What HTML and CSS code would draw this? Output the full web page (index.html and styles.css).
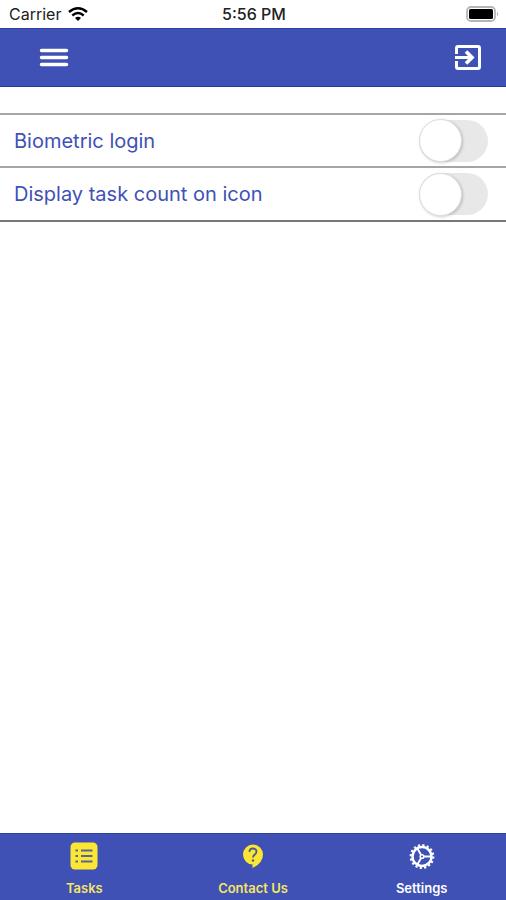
FILE: index.html
```html
<!DOCTYPE html>
<html lang="en">
<head>
<meta charset="utf-8">
<meta name="viewport" content="width=device-width, initial-scale=1">
<title>Settings</title>
<link rel="stylesheet" href="styles.css">
</head>
<body>
<div class="status">
  <div class="carrier">
    <span>Carrier</span>
    <svg width="20" height="14" viewBox="0 0 20 14" fill="none" stroke="#000" stroke-width="2.4" aria-hidden="true">
      <path d="M1 5Q10-2.500 19 5M4.300 8.500Q10 3.500 15.700 8.500"/>
      <path d="M7 11Q10 8.500 13 11L10 14Z" fill="#000" stroke="none"/>
    </svg>
  </div>
  <span class="time">5:56 PM</span>
  <svg class="battery" width="33" height="16" viewBox="0 0 33 16" aria-hidden="true">
    <rect x="1" y="1" width="28" height="14" rx="4" fill="#fff" stroke="#b5b5b5" stroke-width="1.800"/>
    <rect x="3" y="3" width="24" height="10" rx="1.500" fill="#000"/>
    <path d="M31 5.500q2 2.500 0 5z" fill="#aaa"/>
  </svg>
</div>
<header class="bar">
  <button class="icon-button" type="button" aria-label="Menu">
    <svg width="30" height="20" viewBox="0 0 30 20" stroke="#fff" stroke-width="3.500" stroke-linecap="round" aria-hidden="true">
      <path d="M2.500 2.500H27.500M2.500 9.500H27.500M2.500 16.500H27.500"/>
    </svg>
  </button>
  <button class="icon-button" type="button" aria-label="Log out">
    <svg width="28" height="28" viewBox="0 0 28 28" fill="none" stroke="#fff" stroke-width="3" aria-hidden="true">
      <path d="M2.500 10V4Q2.500 2.500 4 2.500H24Q25.500 2.500 25.500 4V23Q25.500 24.500 24 24.500H4Q2.500 24.500 2.500 23V17M1 13.500H18"/>
      <path d="M12 7.500L18 13.500L12 19.500" stroke-width="3.600"/>
    </svg>
  </button>
</header>
<main class="options">
  <label class="option"><span>Biometric login</span><input class="switch" type="checkbox" role="switch"></label>
  <label class="option"><span>Display task count on icon</span><input class="switch" type="checkbox" role="switch"></label>
</main>
<nav class="tabs">
  <a class="tab" href="#tasks">
    <svg width="28" height="28" viewBox="0 0 28 28" aria-hidden="true">
      <rect x="0.500" y="0.500" width="27" height="27" rx="4.500" fill="#fbe733"/>
      <path d="M11 8.500H22.500M11 14H22.500M11 19.500H22.500M5.500 8.500H8M5.500 14H8M5.500 19.500H8" stroke="#5b6497" stroke-width="2"/>
    </svg>
    <span>Tasks</span>
  </a>
  <a class="tab" href="#contact">
    <svg width="28" height="28" viewBox="0 0 28 28" aria-hidden="true">
      <path d="M14 2.500A10 10 0 0 0 4 12.500A10 10 0 0 0 13.500 22.500V26Q24 21 24 12.500A10 10 0 0 0 14 2.500Z" fill="#fbe733"/>
      <path d="M10.500 10Q10.500 6.500 14 6.500Q17.500 6.500 17.500 9.800C17.500 12.500 14 12.500 14 15.500" fill="none" stroke="#4d5890" stroke-width="1.800"/>
      <circle cx="14" cy="18.500" r="1.200" fill="#4d5890"/>
    </svg>
    <span>Contact Us</span>
  </a>
  <a class="tab current" href="#settings" aria-current="page">
    <svg width="28" height="28" viewBox="0 0 28 28" fill="none" stroke="#fff" aria-hidden="true">
      <circle cx="14" cy="14.500" r="11.300" stroke-width="2.200" stroke-dasharray="2.200 2.238"/>
      <circle cx="14" cy="14.500" r="9.500" stroke-width="2.400"/>
      <circle cx="14" cy="14.500" r="1.800" stroke-width="1.500"/>
      <path d="M16 14.500H23M13 12.700L9.500 6.800M13 16.300L9.500 22.200" stroke-width="1.900"/>
    </svg>
    <span>Settings</span>
  </a>
</nav>
</body>
</html>
```
FILE: styles.css
```css
* {
  box-sizing: border-box;
}

body {
  margin: 0;
  min-height: 100vh;
  display: flex;
  flex-direction: column;
  background: #fff;
  color: #3f51b5;
  font-family: Inter, "Liberation Sans", sans-serif;
}

.status {
  display: grid;
  grid-template-columns: 1fr auto 1fr;
  align-items: center;
  height: 28px;
  padding: 0 7px 0 9px;
  color: #222;
  font-size: 16px;
}

.carrier {
  display: flex;
  align-items: center;
  gap: 7px;
}

.time {
  font-weight: 500;
}

.battery {
  justify-self: end;
}

.bar {
  display: flex;
  align-items: center;
  justify-content: space-between;
  height: 59px;
  padding: 0 24px 0 39px;
  background: #3f51b5;
  border-top: 1px solid #3040a0;
  border-bottom: 1px solid #2338a0;
}

.icon-button {
  display: flex;
  padding: 0;
  border: 0;
  background: none;
  cursor: pointer;
}

.options {
  flex: 1;
  margin-top: 26px;
}

.option {
  display: flex;
  align-items: center;
  justify-content: space-between;
  height: 53px;
  padding: 0 18px 0 14px;
  border-top: 2px solid #a5a5a5;
  font-size: 20px;
}

.option:last-child {
  height: 56px;
  border-bottom: 2px solid #777;
}

.switch {
  appearance: none;
  display: flex;
  align-items: center;
  width: 69px;
  height: 42px;
  margin: 0;
  border-radius: 21px;
  background: #e8e8e8;
  cursor: pointer;
}

.switch::before {
  content: "";
  width: 41px;
  height: 41px;
  border: 1px solid #ddd;
  border-radius: 50%;
  background: #fff;
  box-shadow: 1px 1px 3px rgba(0, 0, 0, 0.2);
}

.switch:checked {
  justify-content: flex-end;
  background: #3f51b5;
}

.tabs {
  display: grid;
  grid-template-columns: repeat(3, 1fr);
  height: 67px;
  background: #3f51b5;
  border-top: 1px solid #3040a0;
}

.tab {
  display: flex;
  flex-direction: column;
  align-items: center;
  gap: 10px;
  padding-top: 8px;
  color: #f5e663;
  font-size: 13px;
  font-weight: 600;
  line-height: 16px;
  text-decoration: none;
}

.current {
  color: #fff;
}
```
